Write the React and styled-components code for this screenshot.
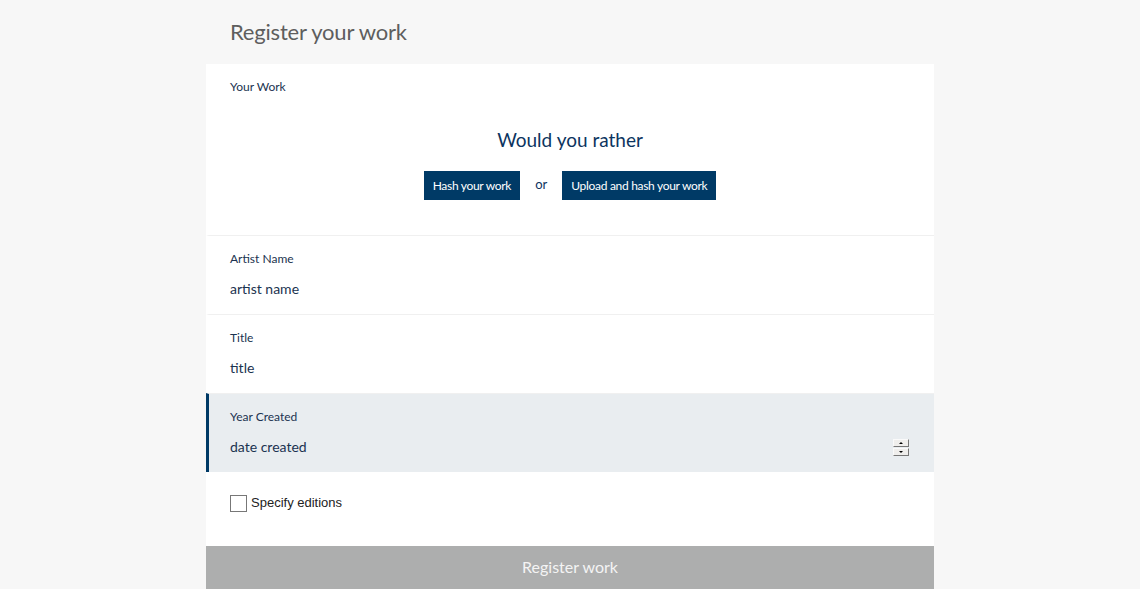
import React from 'react';
import styled, { createGlobalStyle } from 'styled-components';

const Global = createGlobalStyle`
  body {
    margin: 0;
    background: #f7f7f7;
    font-family: Lato, "Open Sans", sans-serif;
  }
`;

const Page = styled.div`
  width: 728px;
  margin: 0 auto;
`;

const PageTitle = styled.h1`
  margin: 0;
  height: 64px;
  padding: 0 0 2px 24px;
  box-sizing: border-box;
  display: flex;
  align-items: center;
  font-size: 22px;
  font-weight: 400;
  color: #5e5e5e;
  letter-spacing: -0.2px;
`;

const Card = styled.div`
  background: #fff;
`;

const Section = styled.div`
  border-top: ${p => (p.first ? 'none' : '1px solid #f0f0f0')};
  border-left: 3px solid ${p => (p.active ? '#003a66' : 'transparent')};
  background: ${p => (p.active ? '#e9edf0' : '#fff')};
  padding: 15px 24px 0 21px;
  height: ${p => p.h}px;
  box-sizing: border-box;
`;

const Label = styled.div`
  font-size: 12px;
  color: #1b3350;
  line-height: 16px;
`;

const Value = styled.div`
  margin-top: 13px;
  font-size: 14px;
  color: #1b3350;
  line-height: 18px;
  display: flex;
  justify-content: space-between;
  align-items: center;
`;

const Rather = styled.div`
  margin-top: 33px;
  text-align: center;
  font-size: 19px;
  color: #0c3460;
`;

const Choices = styled.div`
  margin-top: 20px;
  display: flex;
  justify-content: center;
  align-items: center;
  gap: 15px;
  color: #0c3460;
  font-size: 13px;
`;

const Choice = styled.button`
  border: none;
  background: #003a66;
  color: #fff;
  font-family: inherit;
  font-size: 12px;
  height: 29px;
  padding: 0 9px;
  letter-spacing: -0.3px;
  cursor: pointer;
`;

const Or = styled.span`
  margin-top: -4px;
`;

const Spinner = styled.div`
  display: flex;
  flex-direction: column;
  gap: 1px;
  margin-right: 1px;
`;

const SpinBtn = styled.div`
  width: 14px;
  height: 6px;
  background: #efeeec;
  border: 1px solid #fafafa;
  border-right-color: #777;
  border-bottom-color: #777;
  display: flex;
  align-items: center;
  justify-content: center;
  &::after {
    content: '';
    border-left: 2px solid transparent;
    border-right: 2px solid transparent;
    ${p => (p.down ? 'border-top: 2px solid #000;' : 'border-bottom: 2px solid #000;')}
  }
`;

const CheckRow = styled.label`
  display: flex;
  align-items: flex-start;
  gap: 4px;
  padding: 23px 24px 0;
  height: 74px;
  box-sizing: border-box;
  font-family: "Liberation Sans", Arial, sans-serif;
  font-size: 13px;
  line-height: 15px;
  color: #222;
`;

const Box = styled.span`
  width: 15px;
  height: 15px;
  border: 1px solid #777;
  background: #fff;
  flex-shrink: 0;
`;

const Submit = styled.button`
  display: block;
  width: 100%;
  height: 43px;
  border: none;
  background: #adaeae;
  color: #f4f4f4;
  font-family: inherit;
  font-size: 16px;
  padding-bottom: 4px;
`;

export default function App() {
  return (
    <Page>
      <Global />
      <PageTitle>Register your work</PageTitle>
      <Card>
        <Section first h={171}>
          <Label>Your Work</Label>
          <Rather>Would you rather</Rather>
          <Choices>
            <Choice>Hash your work</Choice>
            <Or>or</Or>
            <Choice>Upload and hash your work</Choice>
          </Choices>
        </Section>
        <Section h={79}>
          <Label>Artist Name</Label>
          <Value>artist name</Value>
        </Section>
        <Section h={79}>
          <Label>Title</Label>
          <Value>title</Value>
        </Section>
        <Section active h={79}>
          <Label>Year Created</Label>
          <Value>
            date created
            <Spinner>
              <SpinBtn />
              <SpinBtn down />
            </Spinner>
          </Value>
        </Section>
        <CheckRow>
          <Box />
          Specify editions
        </CheckRow>
        <Submit>Register work</Submit>
      </Card>
    </Page>
  );
}
